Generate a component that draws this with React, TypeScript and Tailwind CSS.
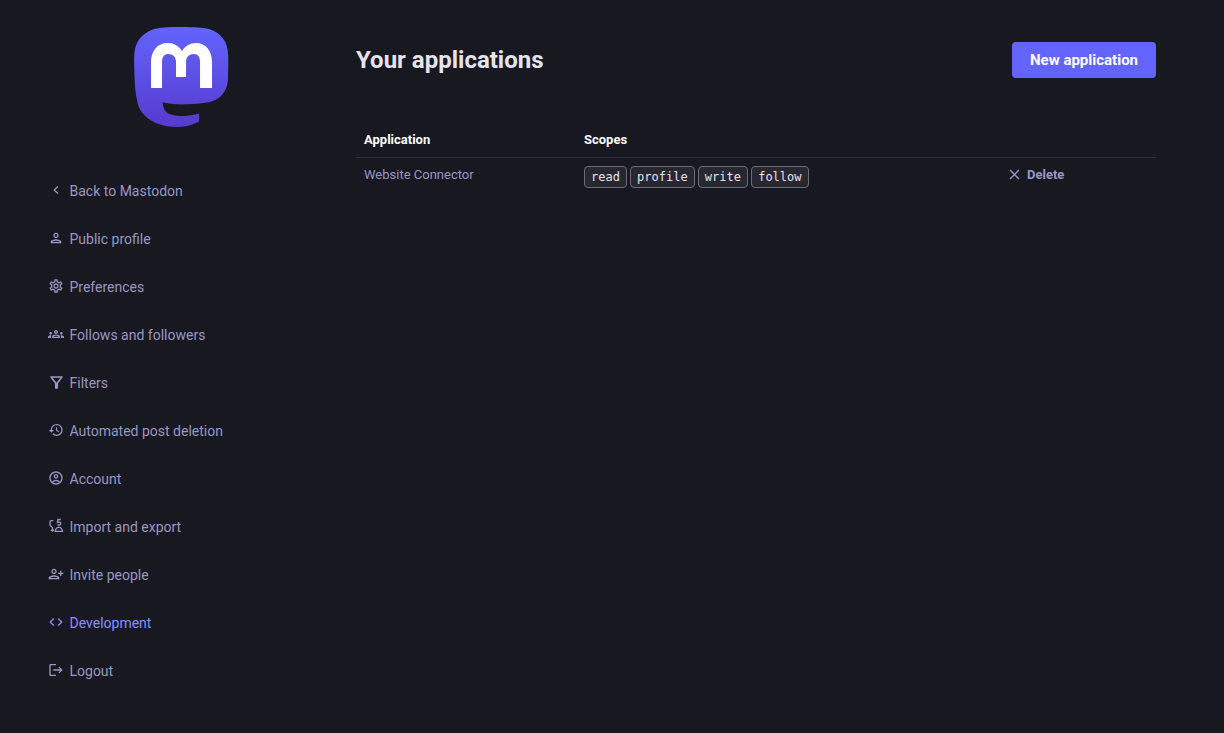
import React from "react";
import {
  MdChevronLeft,
  MdOutlinePerson,
  MdOutlineSettings,
  MdOutlineGroups,
  MdOutlineFilterAlt,
  MdOutlineHistory,
  MdOutlineAccountCircle,
  MdOutlinePersonAdd,
  MdCode,
  MdLogout,
  MdClose,
} from "react-icons/md";

function ImportIcon({ className }: { className?: string }) {
  return (
    <svg viewBox="0 0 16 16" className={className} fill="none" stroke="currentColor" strokeWidth="1.300">
      <path d="M9.500 1.500h3.300M9.800 1.500l-.3 2.800c1.200-.6 3.300-.3 3.300 1.300 0 1.500-2 1.900-3.300 1" />
      <path d="M7.300 13.300c.2-2.300 1.600-4 3.500-4s3.500 1.700 3.700 4z" />
      <path d="M5.300 2.600H3.400C2.500 2.600 2 3.100 2 4v2.800c0 .9.500 1.300 1.200 1.700.9.500 1.300 1 1.300 1.900v2.800M3 11.700l1.500 1.500 1.500-1.500" />
    </svg>
  );
}

const items = [
  { label: "Back to Mastodon", Icon: MdChevronLeft },
  { label: "Public profile", Icon: MdOutlinePerson },
  { label: "Preferences", Icon: MdOutlineSettings },
  { label: "Follows and followers", Icon: MdOutlineGroups },
  { label: "Filters", Icon: MdOutlineFilterAlt, big: true },
  { label: "Automated post deletion", Icon: MdOutlineHistory },
  { label: "Account", Icon: MdOutlineAccountCircle },
  { label: "Import and export", Icon: ImportIcon },
  { label: "Invite people", Icon: MdOutlinePersonAdd, flip: true },
  { label: "Development", Icon: MdCode, active: true },
  { label: "Logout", Icon: MdLogout },
];

function Logo() {
  return (
    <svg width="95" height="100" viewBox="0 0 75 79" className="block">
      <defs>
        <linearGradient id="logoGrad" x1="0" y1="0" x2="0" y2="1">
          <stop offset="0" stopColor="#6364ff" />
          <stop offset="1" stopColor="#563acc" />
        </linearGradient>
      </defs>
      <path
        fill="url(#logoGrad)"
        d="M73.8393 17.4898C72.6973 9.00165 65.2994 2.31235 56.5296 1.01614C55.05 0.797115 49.4441 0 36.4582 0H36.3612C23.3717 0 20.585 0.797115 19.1054 1.01614C10.5798 2.27644 2.79399 8.28712 0.904997 16.8758C-0.00358524 21.1056 -0.100549 25.7949 0.0679394 30.0965C0.308138 36.2651 0.354706 42.423 0.91471 48.5665C1.30184 52.6474 1.97718 56.6957 2.93565 60.6812C4.73083 68.042 12.0037 74.1676 19.1217 76.6666C26.742 79.2728 34.9634 79.7055 42.8942 77.9162C43.7667 77.7151 44.6298 77.4817 45.4835 77.216C47.4076 76.6092 49.6652 75.9305 51.3247 74.7385C51.3474 74.7217 51.3661 74.7001 51.3793 74.6753C51.3925 74.6504 51.3999 74.6229 51.401 74.5948V68.6416C51.4006 68.6154 51.3944 68.5896 51.3827 68.5661C51.371 68.5426 51.3541 68.522 51.3333 68.5058C51.3125 68.4896 51.2884 68.4783 51.2627 68.4726C51.2369 68.4669 51.2103 68.467 51.1846 68.4729C46.1033 69.6747 40.8958 70.2769 35.6712 70.2675C26.6795 70.2675 24.2611 66.0263 23.5686 64.2606C23.0119 62.7346 22.6584 61.1429 22.5169 59.5261C22.5154 59.4989 22.5205 59.4718 22.5317 59.4469C22.5429 59.422 22.5599 59.4 22.5813 59.3828C22.6027 59.3656 22.6279 59.3536 22.6549 59.3478C22.6818 59.342 22.7098 59.3426 22.7365 59.3496C27.7333 60.5401 32.8569 61.1423 37.9987 61.1409C39.2353 61.1409 40.4684 61.1409 41.7051 61.1086C46.8748 60.9644 52.3256 60.7028 57.4139 59.7151C57.5408 59.6899 57.6677 59.6684 57.7764 59.6361C65.8019 58.1101 73.4394 53.3252 74.2155 41.2072C74.2445 40.7301 74.3172 36.2107 74.3172 35.7157C74.3208 34.0335 74.8648 23.7822 73.8393 17.4898Z"
      />
      <g transform="scale(0.79) translate(-134 -27)">
        <path
          fill="#ffffff"
          d="M151 88V62C151 51 157 43 168 43C174 43 179 46 182 51C185 46 190 43 196 43C206 43 212 51 212 62V88H200V62C200 57 198 54 194 54C189 54 186 57 186 62V77H176V62C176 57 173 54 168 54C164 54 162 57 162 62V88Z"
        />
      </g>
    </svg>
  );
}

export default function App() {
  return (
    <div className="min-h-[733px] bg-[#181820] flex font-['Roboto',sans-serif] text-[#e4e4ee]">
      <aside className="w-[356px] shrink-0 pl-[48px]">
        <div className="pt-[27px] pl-[86px] h-[167px]">
          <Logo />
        </div>
        <nav className="flex flex-col">
          {items.map(({ label, Icon, active, flip, big }) => (
            <a
              key={label}
              className={`h-[48px] flex items-center text-[14px] ${active ? "text-[#8c8dff]" : "text-[#9797c4]"}`}
            >
              <span className="w-[16px] h-[16px] flex items-center justify-center mr-[5.5px] mb-[2px] shrink-0">
                <Icon
                  className={
                    big
                      ? "w-[19px] h-[19px] shrink-0"
                      : flip
                        ? "w-[16px] h-[16px] -scale-x-100"
                        : "w-[16px] h-[16px]"
                  }
                />
              </span>
              {label}
            </a>
          ))}
        </nav>
      </aside>
      <main className="w-[800px] shrink-0">
        <header className="flex items-center justify-between pt-[42px] h-[78px]">
          <h1 className="text-[24px] leading-[36px] font-bold text-[#e4e4ee]">Your applications</h1>
          <button className="w-[144px] h-[36px] rounded-[4px] bg-[#6364ff] text-white text-[15px] font-bold">
            New application
          </button>
        </header>
        <table className="mt-[44px] w-full table-fixed">
          <thead>
            <tr className="border-b border-[#2c2d3a]">
              <th className="w-[220px] h-[35px] px-[8px] text-left text-[13px] font-bold text-white">Application</th>
              <th className="w-[424px] px-[8px] text-left text-[13px] font-bold text-white">Scopes</th>
              <th />
            </tr>
          </thead>
          <tbody>
            <tr>
              <td className="px-[8px] pt-[8px] align-top text-[13px] leading-[18px] text-[#9797c4]">Website Connector</td>
              <td className="px-[8px] pt-[8px] align-top">
                <div className="flex gap-[3.2px]">
                  {["read", "profile", "write", "follow"].map((s) => (
                    <code
                      key={s}
                      className="h-[22px] px-[6px] flex items-center rounded-[4px] border border-[#6c6c78] bg-[#272730] text-[#e4e4ee] text-[12px] font-['DejaVu_Sans_Mono',monospace]"
                    >
                      {s}
                    </code>
                  ))}
                </div>
              </td>
              <td className="pt-[8px] pl-[6px] align-top">
                <div className="flex items-center text-[13px] leading-[18px] font-bold text-[#9797c4]">
                  <MdClose className="w-[17px] h-[17px] mr-[4px]" />
                  Delete
                </div>
              </td>
            </tr>
          </tbody>
        </table>
      </main>
    </div>
  );
}
